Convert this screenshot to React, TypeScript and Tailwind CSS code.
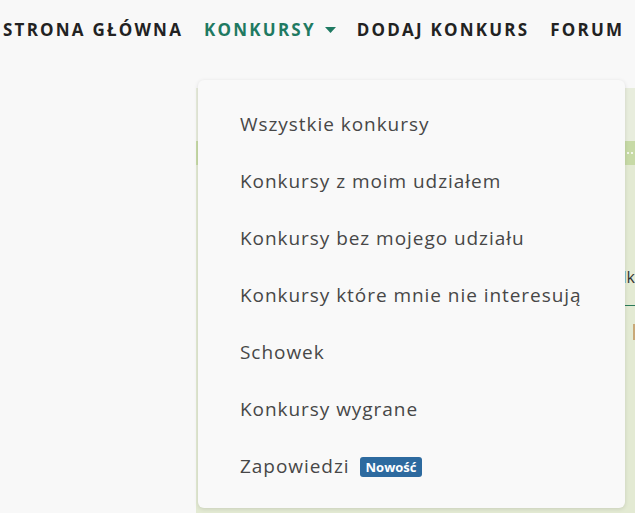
const navItems = [
  { label: "STRONA GŁÓWNA" },
  { label: "KONKURSY", active: true },
  { label: "DODAJ KONKURS" },
  { label: "FORUM" },
];

const menuItems = [
  { label: "Wszystkie konkursy" },
  { label: "Konkursy z moim udziałem" },
  { label: "Konkursy bez mojego udziału" },
  { label: "Konkursy które mnie nie interesują" },
  { label: "Schowek" },
  { label: "Konkursy wygrane" },
  { label: "Zapowiedzi", badge: "Nowość" },
];

const App = () => {
  return (
    <div className="relative h-[513px] w-[635px] overflow-hidden bg-[#f8f8f8] font-['Open_Sans',sans-serif]">
      <nav className="flex h-[60px] items-center gap-[21px] pl-[3px]">
        {navItems.map(item => (
          <a
            key={item.label}
            className={`flex items-center gap-[9px] text-[17px] font-bold tracking-[0.13em] ${
              item.active ? "text-[#1f7a62]" : "text-[#222]"
            }`}
          >
            {item.label}
            {item.active && (
              <svg width="11" height="6" viewBox="0 0 11 6">
                <path d="M0 0h11L5.5 6z" fill="#1f7a62" />
              </svg>
            )}
          </a>
        ))}
      </nav>

      {/* content behind the dropdown */}
      <div className="ml-[196px] mt-[28px] h-[440px] bg-[#e3ead3]">
        <div className="h-[53px] bg-[#e8eddd]" />
        <div className="flex h-[24px] items-center justify-end gap-[2px] bg-[#c7daa6] pr-[2px]">
          <span className="size-[2px] rounded-full bg-white" />
          <span className="size-[2px] rounded-full bg-white" />
        </div>
        <div className="flex justify-end pt-[100px] pr-0 text-[16px] text-[#333]">lk</div>
        <div className="ml-auto mt-[16px] h-[1px] w-[10px] bg-[#2a7a5a]" />
        <div className="ml-auto mt-[18px] h-[16px] w-[2px] bg-[#c9a978]" />
      </div>

      <div className="absolute left-[198px] top-[80px] h-[428px] w-[427px] rounded-[6px] bg-[#f9f9f9] shadow-[0_1px_4px_rgba(0,0,0,0.12)]">
        <ul className="flex flex-col pt-[16px] pl-[42px]">
          {menuItems.map(item => (
            <li
              key={item.label}
              className="flex h-[57px] items-center gap-[10px] text-[19px] tracking-[0.05em] text-[#474747]"
            >
              {item.label}
              {item.badge && (
                <span className="rounded-[3px] bg-[#2d6a9f] px-[6px] py-[2px] text-[13px] font-bold leading-[16px] tracking-normal text-white">
                  {item.badge}
                </span>
              )}
            </li>
          ))}
        </ul>
      </div>
    </div>
  );
};

export default App;
